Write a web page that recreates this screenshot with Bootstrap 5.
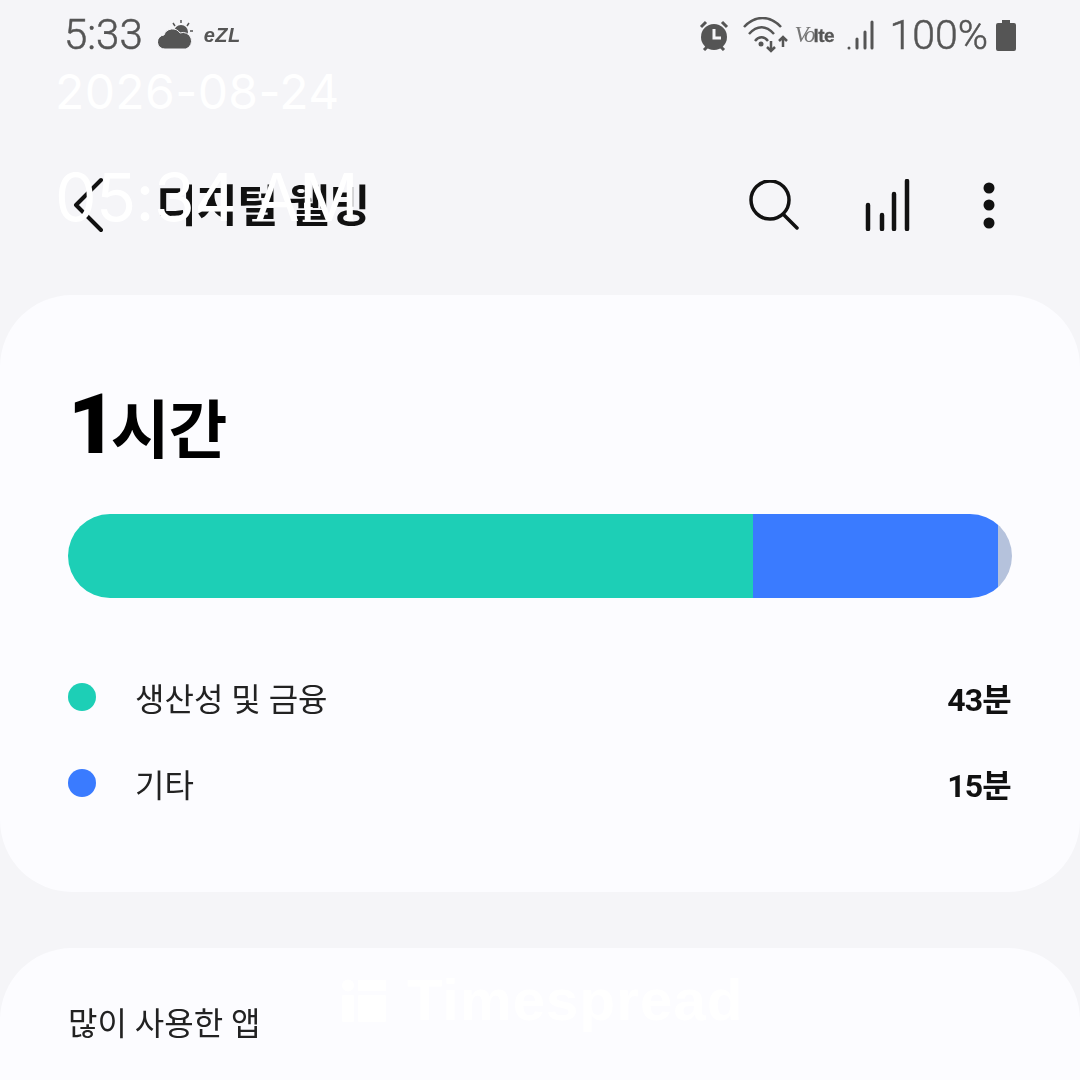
<!DOCTYPE html>
<html lang="ko">
<head>
  <meta charset="UTF-8">
  <title>디지털 웰빙</title>
  <link rel="stylesheet" href="https://cdn.jsdelivr.net/npm/bootstrap@5.3.0/dist/css/bootstrap.min.css">
  <style>
    html, body { height: 1080px; overflow: hidden; }
    body { background: #f5f5f8; font-family: "Roboto", "Noto Sans CJK KR", sans-serif; color: #111; }
    .phone { height: 1080px; overflow: hidden; }
    /* the reference is an upscaled capture, everything under the stamp is soft */
    .soft-layer { filter: blur(.6px); }

    .status-row { height: 70px; padding: 0 63px 0 64px; color: #555; }
    .status-time { font-size: 42px; line-height: 1; font-weight: 300; -webkit-text-stroke: .5px #555; }
    .status-pct { font-size: 41px; line-height: 1; font-weight: 300; -webkit-text-stroke: .5px #555; margin-left: 14px; margin-right: 7px; }
    .weather-icon { margin-left: 15px; }
    .ezl { font: italic 900 20px "Liberation Sans", sans-serif; letter-spacing: .5px; margin-left: 11px; }
    .wifi-icon { margin-left: 14px; margin-right: 6px; }
    .volte { width: 42px; line-height: 1; white-space: nowrap; letter-spacing: -.5px; }
    .volte i { font: italic 23px "Liberation Serif", serif; color: #777; letter-spacing: -2px; }
    .volte b { font: 700 19px "Liberation Sans", sans-serif; -webkit-text-stroke: .3px #555; }
    .signal-icon { margin-left: 11px; }

    .title-row { height: 225px; padding: 45px 84px 0 73px; }
    .title-text { font-size: 44.500px; font-weight: 700; line-height: 1; margin: 4px 0 0 53px; letter-spacing: -.3px; }
    .stats-icon { margin-left: 66px; }
    .more-icon { margin-left: 71px; }

    .panel { background: #fcfcff; border-radius: 72px; padding: 0 68px; }
    .panel-main { height: 597px; margin-bottom: 56px; padding-top: 88px; }
    .panel-apps { height: 300px; padding-top: 54px; font-size: 32px; line-height: 44px; color: #222; }

    .total { height: 84px; font-size: 64px; font-weight: 700; line-height: 84px; letter-spacing: -1px; margin-bottom: 47px; color: #000; }
    .total b { font-size: 84px; font-weight: 900; font-family: "Roboto", sans-serif; letter-spacing: -3px; margin-right: -3px; }

    .usage-bar { height: 84px; border-radius: 42px; overflow: hidden; margin-bottom: 77px; }
    .seg-green { background: #1dcfb6; }
    .seg-blue { background: #3a7bff; }
    .seg-grey { background: #b5c2dc; }

    .legend-row { height: 44px; margin-bottom: 42px; font-size: 32px; line-height: 44px; color: #222; }
    .legend-dot { width: 28px; height: 28px; border-radius: 50%; margin-right: 39px; flex: none; }
    .legend-text { margin-top: 6px; }
    .legend-val { font-weight: 700; font-size: 32px; letter-spacing: -.8px; margin: 6px 1px 0 auto; color: #111; }

    .stamp { position: absolute; left: 55px; color: #fff; line-height: 1; font-family: "Inter", sans-serif; }
    .stamp-date { top: 68px; font-size: 48px; letter-spacing: .4px; }
    .stamp-time { top: 164px; font-size: 66px; letter-spacing: -.6px; }
    .stamp-logo { position: absolute; left: 342px; top: 971px; color: #fff; font: 700 58px "Liberation Sans", sans-serif; line-height: 1; letter-spacing: 1.200px; display: flex; align-items: center; gap: 21px; }
  </style>
</head>
<body>
<div class="phone position-relative">
  <div class="soft-layer">

    <!-- status bar -->
    <div class="status-row d-flex align-items-center justify-content-between">
      <div class="d-flex align-items-center">
        <span class="status-time">5:33</span>
        <svg class="weather-icon" width="35" height="30" viewBox="0 0 35 30" fill="#555">
          <circle cx="23" cy="12" r="7"/>
          <path d="M23 0v3M31 3l-2 3M35 11h-3M15 3l2 3" stroke="#555" stroke-width="1.500"/>
          <path d="M7 29a7 7 0 0 1-1-14 9 9 0 0 1 16-2 8 8 0 0 1 6 16z" stroke="#f5f5f8" stroke-width="1"/>
        </svg>
        <span class="ezl">eZL</span>
      </div>
      <div class="d-flex align-items-center">
        <svg width="30" height="32" viewBox="0 0 30 32">
          <circle cx="15" cy="18" r="13" fill="#555"/>
          <path d="M15 10v9h7" fill="none" stroke="#f5f5f8" stroke-width="3"/>
          <path d="M2 8l5-5M28 8l-5-5M5 31l3-3M25 31l-3-3" stroke="#555" stroke-width="3"/>
        </svg>
        <svg class="wifi-icon" width="45" height="36" viewBox="0 0 45 36" fill="none" stroke="#555" stroke-width="2.500">
          <path d="M1 10c11-12 26-12 37 0M6 17c8-9 17-9 25 0M12 24c4-5 9-5 13 0"/>
          <circle cx="18" cy="27" r="2.500" fill="#555" stroke="none"/>
          <path d="M28 24v10M24 30l4 4 4-4M40 30V20M36 24l4-4 4 4" stroke-width="2.500"/>
        </svg>
        <span class="volte"><i>Vo</i><b>lte</b></span>
        <svg class="signal-icon" width="28" height="32" viewBox="0 0 28 32" stroke="#555" stroke-width="3" stroke-linecap="round">
          <path d="M2 29v0M10 29v-9M18 29V13M25 29V3"/>
        </svg>
        <span class="status-pct">100%</span>
        <svg width="22" height="32" viewBox="0 0 22 32" fill="#555">
          <path d="M7 1h8v3h4a2 2 0 0 1 2 2v24a2 2 0 0 1-2 2H3a2 2 0 0 1-2-2V6a2 2 0 0 1 2-2h4z"/>
        </svg>
      </div>
    </div>

    <!-- title row -->
    <div class="title-row d-flex align-items-center justify-content-between">
      <div class="d-flex align-items-center">
        <svg width="30" height="56" viewBox="0 0 30 56" fill="none" stroke="#111" stroke-width="4" stroke-linecap="round" stroke-linejoin="round">
          <path d="M28 3L3 28l25 25"/>
        </svg>
        <span class="title-text">디지털 웰빙</span>
      </div>
      <div class="d-flex align-items-center">
        <svg width="50" height="50" viewBox="0 0 50 50" fill="none" stroke="#111" stroke-width="3.500" stroke-linecap="round">
          <circle cx="21" cy="20" r="19"/>
          <path d="M35 35l13 13"/>
        </svg>
        <svg class="stats-icon" width="46" height="52" viewBox="0 0 46 52" fill="none" stroke="#111" stroke-width="4.500" stroke-linecap="round">
          <path d="M3 50V26M17 50V36M29 50V15M42 50V2"/>
        </svg>
        <svg class="more-icon" width="14" height="48" viewBox="0 0 14 48" fill="#111">
          <circle cx="7" cy="7" r="5.500"/><circle cx="7" cy="24" r="5.500"/><circle cx="7" cy="42" r="5.500"/>
        </svg>
      </div>
    </div>

    <!-- usage card -->
    <div class="panel panel-main">
      <div class="total"><b>1</b>시간</div>
      <div class="usage-bar d-flex">
        <div class="seg-green" style="width: 72.6%"></div>
        <div class="seg-blue" style="width: 25.9%"></div>
        <div class="seg-grey" style="width: 1.5%"></div>
      </div>
      <div class="legend-row d-flex align-items-center">
        <span class="legend-dot seg-green"></span>
        <span class="legend-text">생산성 및 금융</span>
        <span class="legend-val">43분</span>
      </div>
      <div class="legend-row d-flex align-items-center">
        <span class="legend-dot seg-blue"></span>
        <span class="legend-text">기타</span>
        <span class="legend-val">15분</span>
      </div>
    </div>

    <!-- most used apps -->
    <div class="panel panel-apps">많이 사용한 앱</div>
  </div>

  <!-- watermark stamped on top of the screenshot -->
  <div class="stamp stamp-date">2026-08-24</div>
  <div class="stamp stamp-time">05:34 AM</div>
  <div class="stamp-logo">
    <svg width="44" height="44" viewBox="0 0 44 44" fill="#fff">
      <circle cx="6" cy="7.500" r="6"/><rect x="16" y="2" width="28" height="11"/>
      <rect x="0" y="17" width="12" height="27" rx="1"/><rect x="16" y="17" width="28" height="27" rx="1"/>
    </svg>
    <span>Timespread</span>
  </div>
</div>
<script src="https://cdn.jsdelivr.net/npm/bootstrap@5.3.0/dist/js/bootstrap.bundle.min.js"></script>
</body>
</html>
